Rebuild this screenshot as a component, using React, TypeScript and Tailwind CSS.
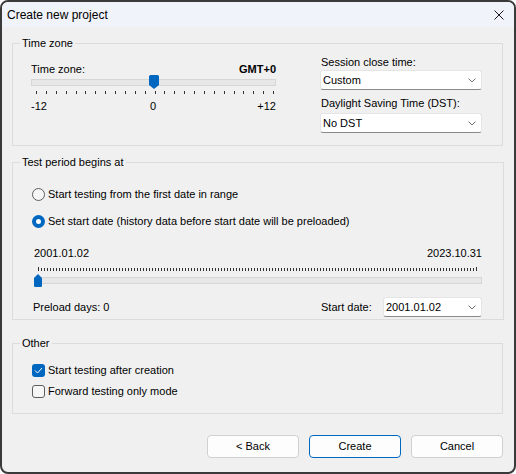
import React from 'react';

const font = "font-['Liberation_Sans',Arial,sans-serif]";

function GroupBox({ title, className, children }: { title: string; className: string; children: React.ReactNode }) {
  return (
    <fieldset className={`border border-[#dcdcdc] ${className}`}>
      <legend className="ml-[7px] px-[2px] text-[11px] leading-[16px]">{title}</legend>
      {children}
    </fieldset>
  );
}

function Chevron() {
  return (
    <svg width="8" height="5" viewBox="0 0 8 5" className="shrink-0">
      <path d="M0.5 0.5 L4 4 L7.5 0.5" fill="none" stroke="#707070" strokeWidth="1" />
    </svg>
  );
}

function Select({ value, className }: { value: string; className: string }) {
  return (
    <div
      className={`flex h-[20px] items-center justify-between rounded-[3px] border border-[#e5e5e5] border-b-[#8a8a8a] bg-white pl-[2px] pr-[5px] text-[11px] ${className}`}
    >
      <span>{value}</span>
      <Chevron />
    </div>
  );
}

function Radio({ checked, label }: { checked?: boolean; label: string }) {
  return (
    <div className="flex h-[16px] items-center gap-[3px]">
      {checked ? (
        <div className="flex h-[13px] w-[13px] items-center justify-center rounded-full bg-[#0067c0]">
          <div className="h-[5px] w-[5px] rounded-full bg-white" />
        </div>
      ) : (
        <div className="h-[13px] w-[13px] rounded-full border border-[#5d5d5d] bg-[#f6f6f6]" />
      )}
      <span className="text-[11px] leading-[16px]">{label}</span>
    </div>
  );
}

function Checkbox({ checked, label }: { checked?: boolean; label: string }) {
  return (
    <div className="flex h-[16px] items-center gap-[3px]">
      {checked ? (
        <div className="flex h-[13px] w-[13px] items-center justify-center rounded-[3px] bg-[#0067c0]">
          <svg width="9" height="7" viewBox="0 0 9 7">
            <path d="M1 3.5 L3.5 6 L8 1" fill="none" stroke="white" strokeWidth="1" />
          </svg>
        </div>
      ) : (
        <div className="h-[13px] w-[13px] rounded-[3px] border border-[#5d5d5d] bg-[#f6f6f6]" />
      )}
      <span className="text-[11px] leading-[16px]">{label}</span>
    </div>
  );
}

function Button({ label, primary }: { label: string; primary?: boolean }) {
  return (
    <button
      className={`h-[23px] w-[92px] rounded-[4px] border bg-[#fdfdfd] text-[11px] text-black ${
        primary ? 'border-[#0067c0]' : 'border-[#d0d0d0]'
      }`}
    >
      {label}
    </button>
  );
}

export default function App() {
  const tzTicks = Array.from({ length: 25 }, (_, i) => 5 + i * 9.875);
  const dateTicks = Array.from({ length: 147 }, (_, i) => 4 + i * 3);

  return (
    <div className={`${font} flex h-[474px] w-[516px] flex-col overflow-hidden rounded-[8px] border-2 border-[#3a3a3a] bg-[#f0f0f0] text-black`}>
      {/* title bar */}
      <div className="flex h-[25px] shrink-0 items-center justify-between bg-[#f0f3f9] pl-[5px] pr-[10px]">
        <span className="text-[12px]">Create new project</span>
        <svg width="10" height="10" viewBox="0 0 10 10">
          <path d="M0.5 0.5 L9.5 9.5 M9.5 0.5 L0.5 9.5" stroke="#1a1a1a" strokeWidth="1" />
        </svg>
      </div>

      <div className="flex flex-col pl-[10px] pr-[11px] pt-[8px]">
        {/* Time zone */}
        <GroupBox title="Time zone" className="h-[111px]">
          <div className="flex pl-[18px]">
            <div className="flex w-[245px] flex-col">
              <div className="mt-[10px] flex justify-between text-[11px] leading-[16px]">
                <span>Time zone:</span>
                <span className="font-bold">GMT+0</span>
              </div>
              <div className="relative mt-[2px] h-[7px] border border-[#d6d6d6] bg-[#e7e7e7]">
                <svg width="10" height="14" viewBox="0 0 10 14" className="absolute left-[117px] top-[-5px]">
                  <path d="M1.5 0 H8.5 A1.5 1.5 0 0 1 10 1.5 V10 L5 14 L0 10 V1.5 A1.5 1.5 0 0 1 1.5 0 Z" fill="#0067c0" />
                </svg>
              </div>
              <svg width="245" height="3" className="mt-[5px]">
                {tzTicks.map((x, i) => (
                  <rect key={i} x={Math.round(x)} y="0" width="1" height="3" fill="#333" />
                ))}
              </svg>
              <div className="relative mt-[4px] flex justify-between text-[11px] leading-[16px]">
                <span>-12</span>
                <span className="absolute left-[119px]">0</span>
                <span>+12</span>
              </div>
            </div>
            <div className="ml-[44px] flex w-[162px] flex-col">
              <span className="mt-[3px] pl-[1px] text-[11px] leading-[16px]">Session close time:</span>
              <Select value="Custom" className="" />
              <span className="mt-[5px] pl-[1px] text-[11px] leading-[16px]">Daylight Saving Time (DST):</span>
              <Select value="No DST" className="mt-[2px]" />
            </div>
          </div>
        </GroupBox>

        {/* Test period */}
        <GroupBox title="Test period begins at" className="mt-[8px] h-[166px]">
          <div className="flex flex-col pl-[19px] pr-[21px]">
            <div className="mt-[16px]">
              <Radio label="Start testing from the first date in range" />
            </div>
            <div className="mt-[11px]">
              <Radio checked label="Set start date (history data before start date will be preloaded)" />
            </div>
            <div className="mt-[16px] flex justify-between pl-[2px] text-[11px] leading-[16px]">
              <span>2001.01.02</span>
              <span>2023.10.31</span>
            </div>
            <svg width="448" height="4" className="ml-[2px] mt-[6px]">
              {dateTicks.map((x, i) => (
                <rect
                  key={i}
                  x={x}
                  y={i === 0 || i === dateTicks.length - 1 ? 0 : 1}
                  width="1"
                  height={i === 0 || i === dateTicks.length - 1 ? 4 : 3}
                  fill="#333"
                />
              ))}
            </svg>
            <div className="relative ml-[2px] mt-[6px] h-[7px] border border-[#d6d6d6] bg-[#e7e7e7]">
              <svg width="8" height="13" viewBox="0 0 8 13" className="absolute left-[-1px] top-[-4px]">
                <path d="M4 0 L8 4 V11.5 A1.5 1.5 0 0 1 6.5 13 H1.5 A1.5 1.5 0 0 1 0 11.5 V4 Z" fill="#0067c0" />
              </svg>
            </div>
            <div className="mt-[13px] flex h-[20px] items-center justify-between pl-[1px]">
              <span className="text-[11px]">Preload days: 0</span>
              <div className="flex items-center">
                <span className="w-[62px] text-[11px]">Start date:</span>
                <Select value="2001.01.02" className="w-[99px]" />
              </div>
            </div>
          </div>
        </GroupBox>

        {/* Other */}
        <GroupBox title="Other" className="mt-[15px] h-[79px]">
          <div className="flex flex-col pl-[19px]">
            <div className="mt-[11px]">
              <Checkbox checked label="Start testing after creation" />
            </div>
            <div className="mt-[5px]">
              <Checkbox label="Forward testing only mode" />
            </div>
          </div>
        </GroupBox>

        <div className="mt-[21px] flex justify-end gap-[10px]">
          <Button label="< Back" />
          <Button label="Create" primary />
          <Button label="Cancel" />
        </div>
      </div>
    </div>
  );
}
